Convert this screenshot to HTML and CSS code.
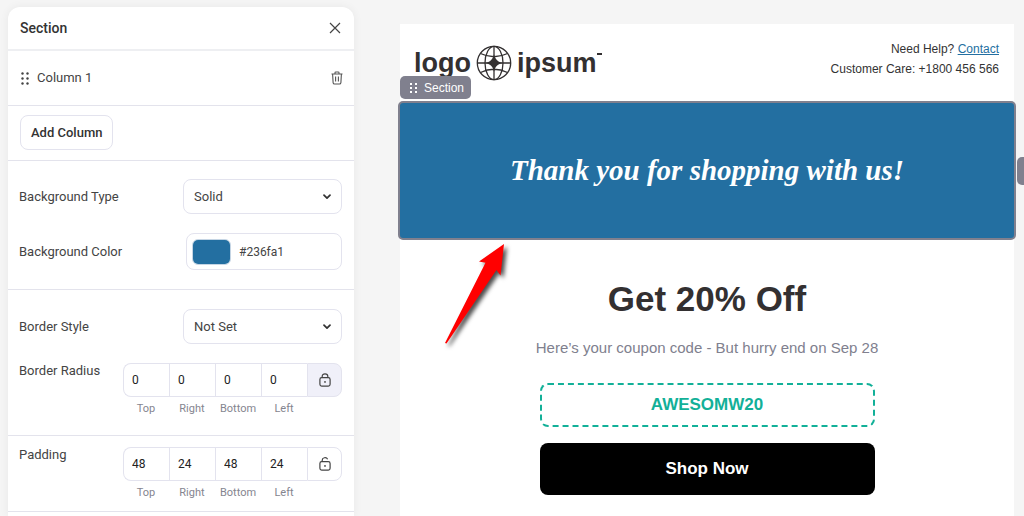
FILE: index.html
```html
<!DOCTYPE html>
<html lang="en">
<head>
	<meta charset="UTF-8">
	<meta name="viewport" content="width=device-width, initial-scale=1">
	<title>Email Editor</title>
	<link rel="stylesheet" href="styles.css">
</head>
<body>
	<div class="editor">
		<aside class="panel">
			<header class="panel-head">
				<h2 class="panel-title">Section</h2>
				<button type="button" class="icon-btn" aria-label="Close">
					<svg width="12" height="12" viewBox="0 0 12 12"><path d="M1 1l10 10M11 1L1 11" fill="none" stroke="#444" stroke-width="1.2"/></svg>
				</button>
			</header>

			<div class="column-row">
				<svg width="8" height="13" viewBox="0 0 8 13" fill="#444"><circle cx="1.5" cy="1.5" r="1.2"/><circle cx="6.5" cy="1.5" r="1.2"/><circle cx="1.5" cy="6.5" r="1.2"/><circle cx="6.5" cy="6.5" r="1.2"/><circle cx="1.5" cy="11.5" r="1.2"/><circle cx="6.5" cy="11.5" r="1.2"/></svg>
				<span class="column-name">Column 1</span>
				<button type="button" class="icon-btn" aria-label="Delete column">
					<svg width="12" height="14" viewBox="0 0 12 14" fill="none" stroke="#555" stroke-width="1.1"><path d="M.5 3h11M4 3V1.8Q4 1 4.8 1h2.4Q8 1 8 1.8V3M1.6 3l.5 8.6Q2.2 13 3.6 13h4.8q1.4 0 1.5-1.4L10.4 3M4.6 5.5v5M7.4 5.5v5"/></svg>
				</button>
			</div>

			<div class="add-row">
				<button type="button" class="add-btn">Add Column</button>
			</div>

			<div class="group">
				<div class="field">
					<label for="bg-type">Background Type</label>
					<div class="select">
						<select id="bg-type"><option>Solid</option></select>
						<svg width="8" height="6" viewBox="0 0 8 6"><path d="M1 1.2l3 3 3-3" fill="none" stroke="#333" stroke-width="1.7" stroke-linecap="round" stroke-linejoin="round"/></svg>
					</div>
				</div>
				<div class="field">
					<label for="bg-color">Background Color</label>
					<div class="color">
						<input type="color" class="swatch" value="#236fa1" aria-label="Pick background color">
						<input type="text" class="hex" id="bg-color" value="#236fa1">
					</div>
				</div>
			</div>

			<div class="group">
				<div class="field">
					<label for="border-style">Border Style</label>
					<div class="select">
						<select id="border-style"><option>Not Set</option></select>
						<svg width="8" height="6" viewBox="0 0 8 6"><path d="M1 1.2l3 3 3-3" fill="none" stroke="#333" stroke-width="1.7" stroke-linecap="round" stroke-linejoin="round"/></svg>
					</div>
				</div>
				<div class="field field-top">
					<span class="field-name">Border Radius</span>
					<div class="sides">
						<input type="text" id="radius-top" value="0">
						<input type="text" id="radius-right" value="0">
						<input type="text" id="radius-bottom" value="0">
						<input type="text" id="radius-left" value="0">
						<button type="button" class="lock locked" aria-label="Unlink radius values">
							<svg width="12" height="14" viewBox="0 0 12 14" fill="none" stroke="#444" stroke-width="1.2"><rect x=".9" y="4.7" width="10.2" height="8.4" rx="1.8"/><path d="M3.2 4.7V3.3a2.8 2.5 0 0 1 5.6 0v1.4"/><circle cx="6" cy="8.9" r=".9" fill="#444" stroke="none"/></svg>
						</button>
						<label for="radius-top">Top</label>
						<label for="radius-right">Right</label>
						<label for="radius-bottom">Bottom</label>
						<label for="radius-left">Left</label>
					</div>
				</div>
			</div>

			<div class="group group-tight">
				<div class="field field-top">
					<span class="field-name">Padding</span>
					<div class="sides">
						<input type="text" id="padding-top" value="48">
						<input type="text" id="padding-right" value="24">
						<input type="text" id="padding-bottom" value="48">
						<input type="text" id="padding-left" value="24">
						<button type="button" class="lock" aria-label="Link padding values">
							<svg width="12" height="14" viewBox="0 0 12 14" fill="none" stroke="#444" stroke-width="1.2"><rect x=".9" y="4.7" width="10.2" height="8.4" rx="1.8"/><path d="M3.2 4.7V3.3a2.8 2.5 0 0 1 5.4-1"/><circle cx="6" cy="8.9" r=".9" fill="#444" stroke="none"/></svg>
						</button>
						<label for="padding-top">Top</label>
						<label for="padding-right">Right</label>
						<label for="padding-bottom">Bottom</label>
						<label for="padding-left">Left</label>
					</div>
				</div>
			</div>
		</aside>

		<main class="canvas">
			<div class="email">
				<div class="email-head">
					<div class="logo">
						<span>logo</span>
						<svg width="36" height="36" viewBox="0 0 36 36" fill="none" stroke="#333031" stroke-width="1.3"><circle cx="18" cy="18" r="16.7"/><ellipse cx="18" cy="18" rx="9" ry="16.7"/><path d="M18 1.3v33.4M1.3 18h33.4M4.5 8.5Q18 15 31.5 8.5M4.5 27.5Q18 21 31.5 27.5"/><path d="M18 11.5Q19.5 16.500 24.500 18Q19.500 19.500 18 24.500Q16.500 19.500 11.500 18Q16.500 16.500 18 11.500z" fill="#333031"/></svg>
						<span>ipsum</span>
						<i class="logo-mark"></i>
					</div>
					<p class="help">Need Help? <a href="#">Contact</a><br>Customer Care: +1800 456 566</p>
				</div>

				<section class="banner">
					<div class="section-tab">
						<svg width="8" height="12" viewBox="0 0 8 12" fill="#fff"><path d="M0 1h2v2H0zM5 1h2v2H5zM0 5h2v2H0zM5 5h2v2H5zM0 9h2v2H0zM5 9h2v2H5z"/></svg>
						Section
					</div>
					<h1>Thank you for shopping with us!</h1>
					<span class="side-handle"></span>
					<svg class="arrow" width="80" height="120" viewBox="0 0 80 120"><path d="M69 9L44 26.500l6.500 1.200L10 108l1.500.500L61.500 35l4 5.500z" fill="#f00"/></svg>
				</section>

				<section class="offer">
					<h2>Get 20% Off</h2>
					<p>Here’s your coupon code - But hurry end on Sep 28</p>
					<div class="coupon">AWESOMW20</div>
					<a href="#" class="shop-btn">Shop Now</a>
				</section>
			</div>
		</main>
	</div>
</body>
</html>
```
FILE: styles.css
```css
* {box-sizing: border-box;}
body {margin: 0; background: #f5f5f5; color: #444; font: 13px/16px Roboto, sans-serif;}
h1, h2, p {margin: 0;}
button, input, select {margin: 0; font: inherit; color: inherit;}
button {cursor: pointer;}
svg {display: block; flex: none;}

.editor {display: flex; min-height: 100vh; overflow: hidden;}

/* settings panel */
.panel {flex: 0 0 346px; margin: 7px 0 0 8px; background: #fff; border-radius: 12px 12px 0 0; box-shadow: 0 0 10px rgba(0,0,0,.06);}
.panel-head {display: flex; align-items: center; justify-content: space-between; height: 44px; padding: 0 12px; border-bottom: 2px solid #eeeff2;}
.panel-title {font-size: 14px; font-weight: 500; color: #333;}
.icon-btn {padding: 1px; border: 0; background: none;}
.column-row {display: flex; align-items: center; gap: 8px; height: 55px; padding: 0 10px 0 13px; border-bottom: 1px solid #e3e3ec;}
.column-name {flex: 1;}
.add-row {padding: 9px 12px 10px; border-bottom: 1px solid #e3e3ec;}
.add-btn {display: block; height: 35px; padding: 0 10px; border: 1px solid #e3e3ee; border-radius: 8px; background: #fff; color: #333; font-weight: 500;}

.group {padding: 18px 12px 19px 11px; border-bottom: 1px solid #e3e3ec;}
.group + .group {padding-top: 19px;}
.group + .group-tight {padding-top: 11px; padding-bottom: 11px;}
.field {display: flex; align-items: center; justify-content: space-between;}
.field + .field {margin-top: 19px;}
.field-top {align-items: flex-start;}

.select {display: grid; align-items: center; width: 159px;}
.select select, .select svg {grid-area: 1 / 1;}
.select select {width: 100%; height: 35px; padding: 0 10px; border: 1px solid #e3e3ee; border-radius: 8px; background: #fff; appearance: none;}
.select svg {justify-self: end; margin-right: 11px; pointer-events: none;}

.color {display: flex; align-items: center; gap: 8px; width: 156px; height: 37px; padding: 0 5px; border: 1px solid #e3e3ee; border-radius: 8px;}
.swatch {flex: none; width: 39px; height: 26px; padding: 0; border: 1px solid #c5d5e4; border-radius: 6px; background: none; overflow: hidden; appearance: none;}
.swatch::-webkit-color-swatch-wrapper {padding: 0;}
.swatch::-webkit-color-swatch {border: 0;}
.hex {min-width: 0; width: 100%; padding: 0; border: 0; background: none; font-size: 12px;}

.sides {display: grid; grid-template-columns: repeat(4, 46px) 35px; row-gap: 4px;}
.sides input {width: 100%; height: 34px; padding: 0 8px; border: 1px solid #e3e3ee; border-right: 0; background: #fff; color: #222; font-size: 12px;}
.sides input:first-child {border-radius: 8px 0 0 8px;}
.sides label {color: #85858f; font-size: 11px; line-height: 15px; text-align: center;}
.lock {display: flex; align-items: center; justify-content: center; padding: 0; border: 1px solid #e3e3ee; border-radius: 0 8px 8px 0; background: #fff;}
.locked {background: #f0f0f9;}

/* email preview */
.canvas {flex: 1; display: flex; padding: 24px 10px 0 46px;}
.email {flex: 1; background: #fff; font-family: "Liberation Sans", Arial, sans-serif;}
.email-head {display: flex; justify-content: space-between; height: 77px; padding: 15px 15px 0 14px;}
.logo {display: flex; align-items: center; gap: 5px; height: 48px; color: #333031; font-size: 27px; line-height: 32px; font-weight: bold;}
.logo-mark {width: 5px; height: 2px; margin: 0 0 18px -5px; background: #333031;}
.help {color: #333; font-size: 12px; line-height: 20px; text-align: right;}
.help a {color: #236fa1;}

.banner {position: relative; margin: 0 -2px; padding: 48px 24px; border: 2px solid #80808e; border-radius: 5px; background: #236fa1;}
.banner h1 {color: #fff; font: italic bold 29px/39px "Liberation Serif", "Times New Roman", serif; text-align: center;}
.section-tab {position: absolute; top: -27px; left: 0; display: flex; align-items: center; gap: 6px; height: 23px; padding: 0 7px 0 10px; border-radius: 5px; background: #80808e; color: #fff; font-size: 12px;}
.side-handle {position: absolute; top: 54px; right: -14px; width: 11px; height: 28px; border-radius: 5px; background: #80808e;}
.arrow {position: absolute; top: 132px; left: 35px; filter: drop-shadow(3px 3px 2px rgba(0,0,0,.7));}

.offer {display: flex; flex-direction: column; align-items: center; padding: 38px 24px 20px; text-align: center;}
.offer h2 {color: #333031; font-size: 35px; line-height: 42px;}
.offer p {margin-top: 18px; color: #80808e; font-size: 15px; line-height: 20px;}
.coupon {width: 100%; max-width: 335px; margin-top: 25px; padding: 10px; border: 2px dashed #12b098; border-radius: 8px; color: #12b098; font-size: 17px; line-height: 20px; font-weight: bold;}
.shop-btn {width: 100%; max-width: 335px; margin-top: 16px; padding: 16px; border-radius: 8px; background: #000; color: #fff; font-size: 17px; line-height: 20px; font-weight: bold; text-decoration: none;}
```
